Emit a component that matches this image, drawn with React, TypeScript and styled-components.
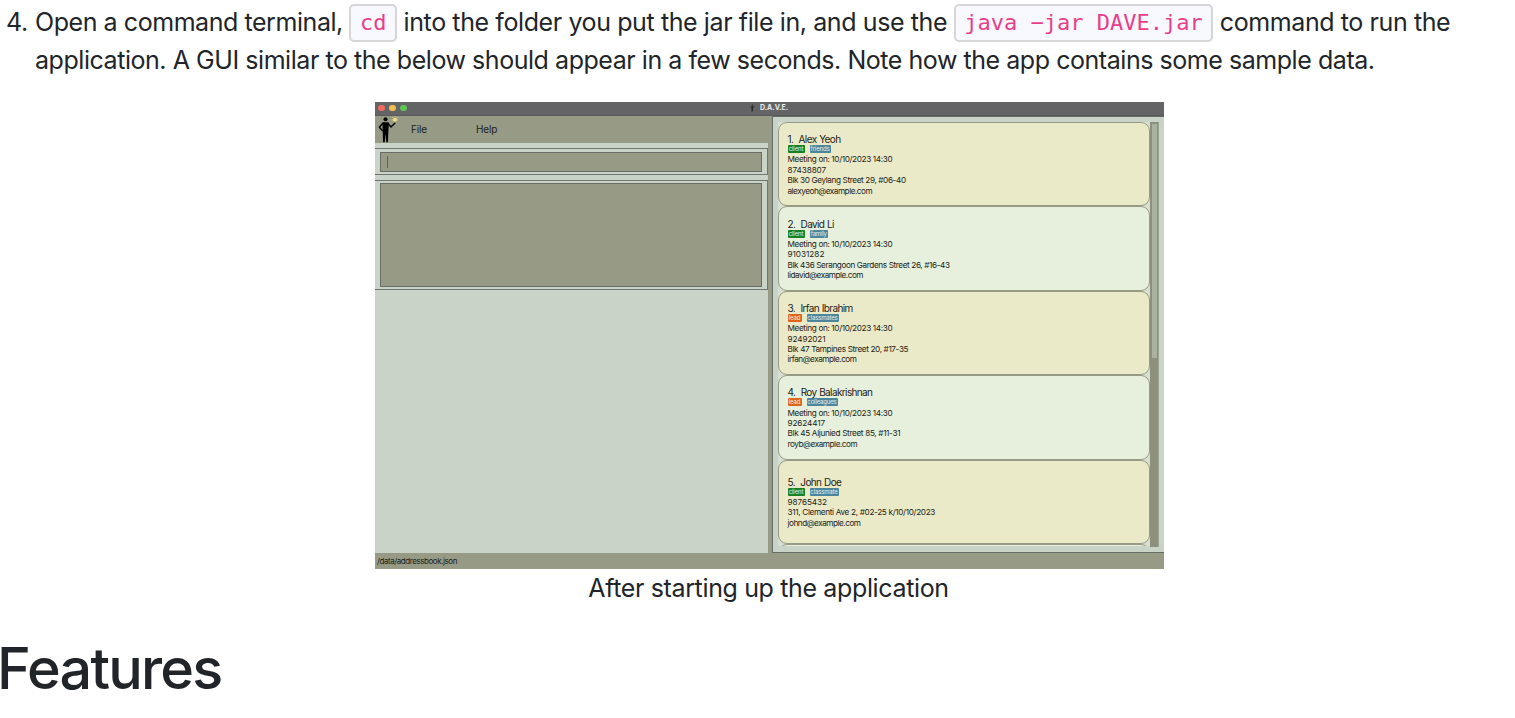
import React from 'react';
import styled, { createGlobalStyle } from 'styled-components';

const Global = createGlobalStyle`
  * { box-sizing: border-box; }
  body { margin: 0; background: #fff; overflow: hidden; }
`;

const Page = styled.main`
  width: 1515px;
  height: 718px;
  overflow: hidden;
  font-family: Inter, 'Liberation Sans', sans-serif;
  color: #212529;
  font-size: 25px;
  line-height: 38px;
`;

const Step = styled.div`
  display: flex;
  padding: 3px 0 0 6px;
  height: 102px;
`;

const StepNumber = styled.span`
  width: 29px;
  flex: none;
  letter-spacing: -0.4px;
`;

const StepText = styled.div`
  display: flex;
  flex-direction: column;
`;

const Line = styled.div`
  white-space: pre;
  height: 38px;
  letter-spacing: -0.45px;
`;

const Run = styled.span<{ $ls: number }>`
  letter-spacing: ${p => p.$ls}px;
`;

const Code = styled.code`
  display: inline-block;
  height: 38px;
  margin-top: 1px;
  line-height: 33px;
  padding: 0 8.5px;
  border: 2px solid #d6d6d6;
  border-radius: 5px;
  background: #f8f8ff;
  color: #e83e8c;
  font-family: 'DejaVu Sans Mono', monospace;
  font-size: 22px;
  letter-spacing: 0;
  vertical-align: top;
`;

const Figure = styled.figure`
  margin: 0 0 0 375px;
  width: 789px;
`;

const Caption = styled.figcaption`
  padding-right: 2px;
  text-align: center;
  letter-spacing: -0.36px;
  white-space: nowrap;
`;

const Heading = styled.h1`
  margin: 26px 0 0 -3px;
  font-size: 57.5px;
  font-weight: 500;
  line-height: 70px;
  letter-spacing: -1.8px;
`;

const AppWindow = styled.div`
  display: flex;
  flex-direction: column;
  height: 467px;
  background: #c9d3c8;
  color: #1c1d18;
  line-height: 1;
`;

const TitleBar = styled.div`
  display: grid;
  grid-template-columns: 373px 1fr;
  align-items: center;
  height: 14px;
  background: #646366;
  border-bottom: 1px solid #59595a;
`;

const Lights = styled.div`
  display: flex;
  gap: 4.4px;
  padding: 0 0 1px 3.2px;
`;

const Light = styled.i<{ $c: string }>`
  width: 6.6px;
  height: 6.6px;
  border-radius: 50%;
  background: ${p => p.$c};
`;

const Title = styled.div`
  display: flex;
  align-items: center;
  gap: 4px;
  padding: 0 0 2px 2px;
  color: #ececec;
  font-size: 7px;
  font-weight: 700;
`;

const Body = styled.div`
  display: flex;
  height: 437px;
`;

const LeftPane = styled.div`
  width: 393px;
`;

const Menu = styled.div`
  display: flex;
  height: 27px;
  background: #979a85;
  font-size: 10px;
  line-height: 27px;
`;

const MenuItem = styled.span<{ $w: number }>`
  width: ${p => p.$w}px;
  letter-spacing: -0.15px;
`;

const Logo = styled.div`
  width: 36px;
  padding-left: 3px;
  line-height: 0;
`;

const Field = styled.div<{ $h: number; $top: number; $pad: string }>`
  height: ${p => p.$h}px;
  margin-top: ${p => p.$top}px;
  padding: ${p => p.$pad};
  border: 1px solid #6f7570;
  border-left: 0;
`;

const FieldInner = styled.div`
  height: 100%;
  padding: 3px 6px;
  background: #979a85;
  border: 1px solid #686d65;
`;

const Caret = styled.div`
  width: 1px;
  height: 12px;
  background: #5d6158;
`;

const Divider = styled.div`
  width: 4px;
  background: #979a85;
`;

const RightPane = styled.div`
  display: flex;
  flex: 1;
  padding: 5px 0 6px 5px;
  border: 1px solid #656b65;
  border-right: 0;
`;

const List = styled.div`
  width: 372px;
  height: 424px;
  overflow: hidden;
  background: #d6dfd0;
`;

const Card = styled.div<{ $alt: boolean; $pad: number }>`
  height: 84.4px;
  padding: ${p => p.$pad}px 0 0 8.5px;
  border: 1px solid #979a85;
  border-radius: 9px;
  background: ${p => (p.$alt ? '#e6f0dc' : '#ebeac8')};
  white-space: pre;
`;

const Name = styled.div`
  font-size: 10px;
  line-height: 12px;
  letter-spacing: -0.62px;
  word-spacing: 0.5px;
`;

const Tags = styled.div`
  display: flex;
  gap: 5px;
  height: 8px;
  margin-bottom: 1.2px;
`;

const Tag = styled.span<{ $kind: string; $w: number }>`
  width: ${p => p.$w}px;
  border-radius: 1px;
  background: ${p => (p.$kind === 'client' ? '#168224' : p.$kind === 'lead' ? '#e0651a' : '#4c869c')};
  color: #e9efe8;
  font-size: 6px;
  line-height: 8px;
  text-align: center;
  letter-spacing: -0.15px;
`;

const Detail = styled.div<{ $ls: number }>`
  font-size: 8.2px;
  line-height: 10.4px;
  letter-spacing: ${p => p.$ls - 0.1}px;
`;

const Scroll = styled.div`
  width: 9px;
  height: 425px;
  padding: 2px;
  background: #8c907c;
  border-right: 1px solid #9ca391;
`;

const Thumb = styled.div`
  width: 5px;
  height: 234px;
  background: #aab19f;
`;

const Status = styled.div`
  height: 16px;
  padding-left: 2px;
  background: #979a85;
  font-size: 8px;
  line-height: 17px;
  letter-spacing: -0.43px;
`;

const Person = ({ w, h, dim }: { w: number; h: number; dim?: boolean }) => (
  <svg width={w} height={h} viewBox="0 0 20 27" opacity={dim ? 0.6 : 1}>
    <circle cx="7.5" cy="3.2" r="2" fill="#000" />
    <path d="M4.6 6.2h5.6l.6.5-.5 10-.4 9.6H8.3l-.7-8.6-.9 8.6H5.1L4.8 17 4.4 6.4z" fill="#000" />
    <path
      d="M4.8 7.2 1.3 11.3l3 3.2M10.3 7.6l2.6 3.4 4-3.8"
      fill="none"
      stroke="#000"
      strokeWidth="1.4"
      strokeLinejoin="round"
      strokeLinecap="round"
    />
    {!dim && <circle cx="17" cy="3.8" r="2" fill="#f8dc86" />}
    {!dim && <path d="M17 1V0M20 4h-1M15 4h-1.5M15.2 2l-.8-.8M18.8 2l.8-.8" stroke="#f3d68a" strokeWidth=".7" />}
  </svg>
);

type Contact = { name: string; tags: [string, number][]; lines: [string, number][] };
const meeting: [string, number] = ['Meeting on: 10/10/2023 14:30', -0.26];

const contacts: Contact[] = [
  { name: '1.  Alex Yeoh', tags: [['client', 17], ['friends', 21]], lines: [meeting, ['87438807', 0], ['Blk 30 Geylang Street 29, #06-40', -0.28], ['alexyeoh@example.com', -0.38]] },
  { name: '2.  David Li', tags: [['client', 17], ['family', 18.5]], lines: [meeting, ['91031282', 0.08], ['Blk 436 Serangoon Gardens Street 26, #16-43', -0.29], ['lidavid@example.com', -0.38]] },
  { name: '3.  Irfan Ibrahim', tags: [['lead', 14], ['classmates', 32]], lines: [meeting, ['92492021', 0], ['Blk 47 Tampines Street 20, #17-35', -0.27], ['irfan@example.com', -0.38]] },
  { name: '4.  Roy Balakrishnan', tags: [['lead', 14], ['colleagues', 31]], lines: [meeting, ['92624417', 0], ['Blk 45 Aljunied Street 85, #11-31', -0.24], ['royb@example.com', -0.35]] },
  { name: '5.  John Doe', tags: [['client', 17], ['classmate', 29]], lines: [['98765432', 0.03], ['311, Clementi Ave 2, #02-25 k/10/10/2023', -0.23], ['johnd@example.com', -0.38]] },
];

export default function App() {
  return (
    <Page>
      <Global />
      <Step>
        <StepNumber>4.</StepNumber>
        <StepText>
          <Line>
            <Run $ls={-0.44}>Open a command terminal, </Run>
            <Code>cd</Code>
            <Run $ls={-0.4}> into the folder you put the jar file in, and use the </Run>
            <Code>java −jar DAVE.jar</Code>
            <Run $ls={-0.4}> command to run the</Run>
          </Line>
          <Line>
            application. A GUI similar to the below should appear in a few seconds. Note how the app contains some sample data.
          </Line>
        </StepText>
      </Step>
      <Figure>
        <AppWindow>
          <TitleBar>
            <Lights>
              <Light $c="#ed6a5f" />
              <Light $c="#f5bf4f" />
              <Light $c="#61c554" />
            </Lights>
            <Title>
              <Person w={6} h={8} dim />
              D.A.V.E.
            </Title>
          </TitleBar>
          <Body>
            <LeftPane>
              <Menu>
                <Logo><Person w={20} h={27} /></Logo>
                <MenuItem $w={65}>File</MenuItem>
                <MenuItem $w={60}>Help</MenuItem>
              </Menu>
              <Field $h={27} $top={5} $pad="3px 5px 2px 5px">
                <FieldInner><Caret /></FieldInner>
              </Field>
              <Field $h={110} $top={5} $pad="2px 5px 2px 5px">
                <FieldInner />
              </Field>
            </LeftPane>
            <Divider />
            <RightPane>
              <List>
                {contacts.map((c, i) => (
                  <Card key={c.name} $alt={i % 2 === 1} $pad={c.lines.length === 4 ? 10.2 : 15.1}>
                    <Name>{c.name}</Name>
                    <Tags>
                      {c.tags.map(([t, w]) => (
                        <Tag key={t} $kind={t} $w={w}>{t}</Tag>
                      ))}
                    </Tags>
                    {c.lines.map(([t, ls]) => (
                      <Detail key={t} $ls={ls}>{t}</Detail>
                    ))}
                  </Card>
                ))}
                <Card $alt $pad={0} />
              </List>
              <Scroll><Thumb /></Scroll>
            </RightPane>
          </Body>
          <Status>/data/addressbook.json</Status>
        </AppWindow>
        <Caption>After starting up the application</Caption>
      </Figure>
      <Heading>Features</Heading>
    </Page>
  );
}
